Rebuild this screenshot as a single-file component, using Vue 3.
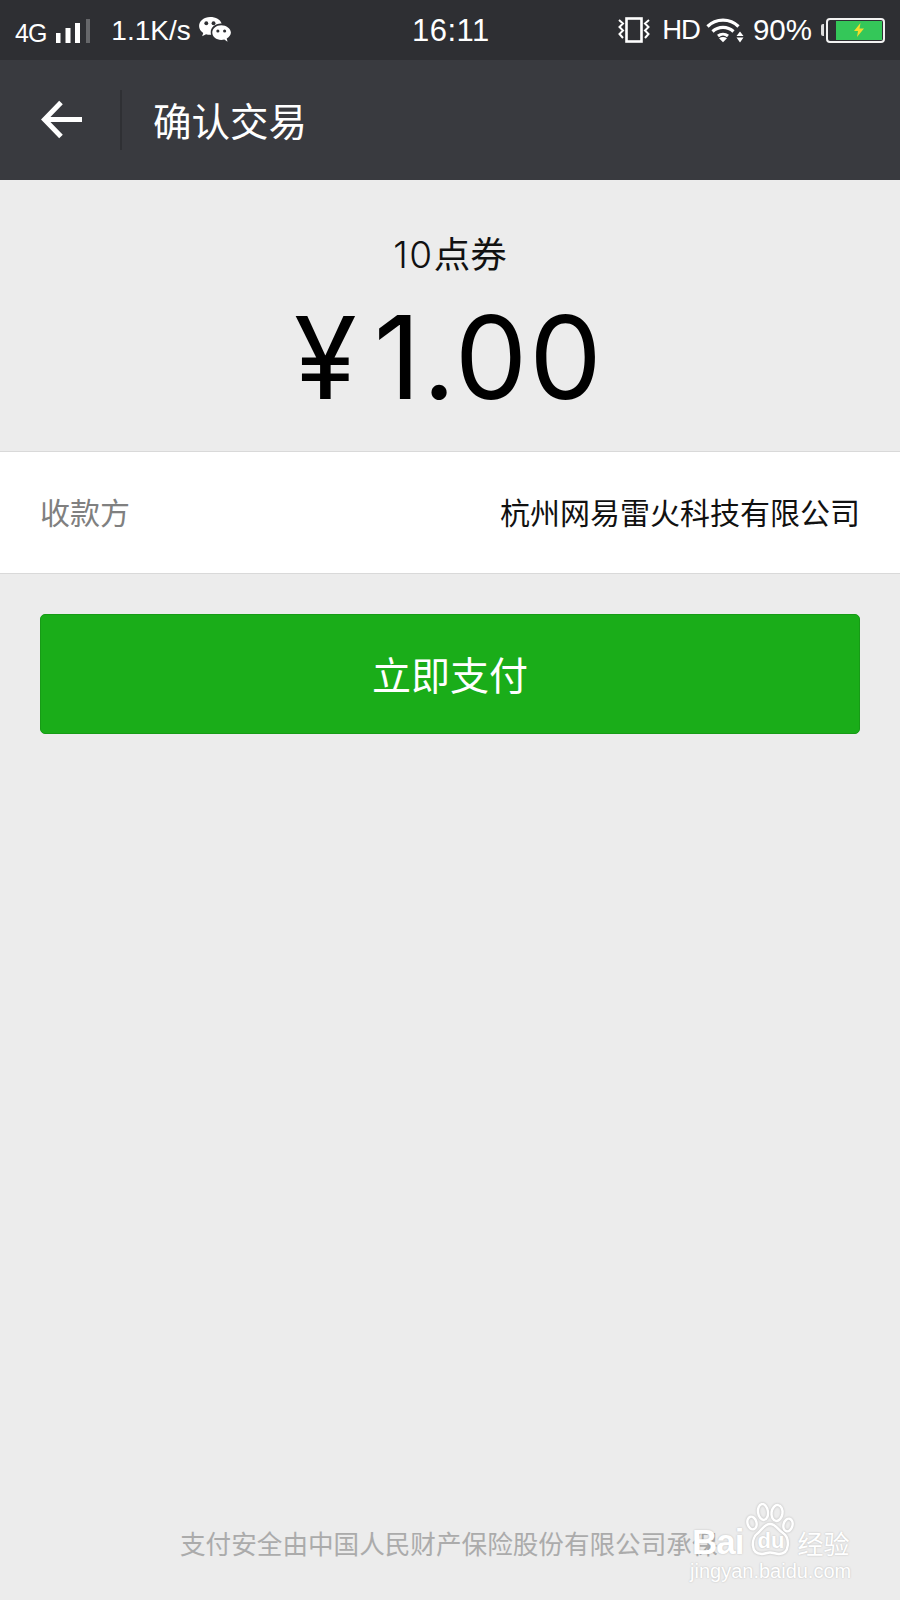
<script setup>
const payee = '杭州网易雷火科技有限公司'
</script>

<template>
  <div class="page">
    <div class="status">
      <div class="left">
        <span class="net">4G</span>
        <svg class="signal" width="34" height="25" viewBox="0 0 34 25">
          <rect x="0" y="14" width="4.500" height="10" fill="#fff" />
          <rect x="9.500" y="9" width="5" height="15" fill="#fff" />
          <rect x="19" y="4" width="5" height="20" fill="#fff" />
          <rect x="30" y="0" width="4" height="24" fill="#66676a" />
        </svg>
        <span class="speed">1.1K/s</span>
        <svg class="wechat" width="33" height="27" viewBox="0 0 34 28">
          <path d="M12.500 0C6 0 1 4.200 1 9.400c0 3 1.700 5.500 4.300 7.300L4.200 20l4-2.100c1.300.4 2.800.6 4.300.6l1-.1c-.3-.9-.4-1.800-.4-2.700 0-5 4.700-8.900 10.400-8.900h.9C23.200 2.700 18.300 0 12.500 0z" fill="#fff" />
          <circle cx="8.500" cy="6.500" r="2" fill="#2e2f33" />
          <circle cx="16" cy="6.500" r="2" fill="#2e2f33" />
          <path d="M24 8.500c-5.200 0-9.300 3.400-9.300 7.700s4.100 7.700 9.300 7.700c1.100 0 2.200-.2 3.200-.5l3.300 2.300-.8-3.400c2.600-1.400 4.300-3.500 4.300-6.100 0-4.300-4.800-7.700-10-7.700z" fill="#fff" />
          <circle cx="20.500" cy="14.500" r="1.600" fill="#2e2f33" />
          <circle cx="27.500" cy="14.500" r="1.600" fill="#2e2f33" />
        </svg>
      </div>
      <span class="clock">16:11</span>
      <div class="right">
        <svg class="vibrate" width="34" height="26" viewBox="0 0 34 26">
          <rect x="9.500" y="1.500" width="15" height="23" fill="none" stroke="#fff" stroke-width="2.600" />
          <path d="M2 3l4 3.500-3.500 3.500 3.500 3.500-3.500 3.500 3.500 4M32 3l-4 3.500 3.500 3.500-3.500 3.500 3.500 3.500-3.500 4" fill="none" stroke="#fff" stroke-width="2" />
        </svg>
        <span class="hd">HD</span>
        <svg class="wifi" width="38" height="26" viewBox="0 0 38 26">
          <path d="M1.500 9.500C10 1 24 1 32.500 9.500" fill="none" stroke="#fff" stroke-width="3.200" />
          <path d="M6.500 14.500c6-5.500 15-5.500 21 0" fill="none" stroke="#fff" stroke-width="3.200" />
          <path d="M12 19c3-2.500 7-2.500 10 0" fill="none" stroke="#fff" stroke-width="3" />
          <path d="M13 21.200c2.500-1.500 5.500-1.500 8 0l-4 4z" fill="#fff" />
          <path d="M34 14.500l3.500 4.500h-7zM34 25.500l3.500-5h-7z" fill="#fff" />
        </svg>
        <span class="pct">90%</span>
        <div class="battery-wrap">
          <span class="nub"></span>
          <div class="battery">
            <div class="charge">
              <svg width="14" height="16" viewBox="0 0 14 16"><path d="M8.500 1L2 9h4l-1 6 7-8.500H7.500z" fill="#f3dc2b" /></svg>
            </div>
          </div>
        </div>
      </div>
    </div>

    <div class="nav">
      <svg class="back" width="44" height="44" viewBox="0 0 44 44">
        <path d="M21 4.500L4.500 21.500 21 38.500M5 21.500H42" fill="none" stroke="#fff" stroke-width="5" />
      </svg>
      <span class="divider"></span>
      <span class="title">确认交易</span>
    </div>

    <div class="summary">
      <div class="item"><span class="latin">10</span>点券</div>
      <div class="amount"><span class="yen">¥</span><span class="num">1.00</span></div>
    </div>

    <div class="row">
      <span class="label">收款方</span>
      <span class="value">{{ payee }}</span>
    </div>

    <div class="action">
      <button class="pay">立即支付</button>
    </div>

    <div class="footer">支付安全由中国人民财产保险股份有限公司承保</div>

    <div class="watermark">
      <div class="mark-top">
        <span class="bai">Bai</span>
        <div class="paw-box">
          <svg width="48" height="53" viewBox="0 0 48 53">
            <g fill="none" stroke="#fff" stroke-width="2.400">
              <ellipse cx="6" cy="20" rx="4.500" ry="6.500" transform="rotate(-15 6 20)" />
              <ellipse cx="17" cy="9" rx="5" ry="8" transform="rotate(-8 17 9)" />
              <ellipse cx="31" cy="10" rx="5.500" ry="8" transform="rotate(8 31 10)" />
              <ellipse cx="42" cy="22" rx="4.500" ry="6.500" transform="rotate(15 42 22)" />
              <path d="M24 21c-6 0-8 6-12 9-7 5-8 21 4 21 3 0 5-1.500 8-1.500s6 1.500 9 1.500c11 0 11-16 4-21-5-3-7-9-13-9z" />
            </g>
          </svg>
          <span class="du">du</span>
        </div>
        <span class="jy">经验</span>
      </div>
      <div class="mark-url">jingyan.baidu.com</div>
    </div>
  </div>
</template>

<style>
html, body { margin: 0; padding: 0; }
</style>

<style scoped>
.page {
  position: relative;
  width: 900px;
  height: 1600px;
  overflow: hidden;
  background: #ececec;
  display: flex;
  flex-direction: column;
  font-family: "Noto Sans CJK SC", "Noto Sans", sans-serif;
}
.status {
  height: 60px;
  flex: none;
  background: #2e2f33;
  color: #fff;
  display: flex;
  align-items: center;
  justify-content: space-between;
  padding: 0 15px;
  box-sizing: border-box;
  font-family: "Liberation Sans", sans-serif;
  position: relative;
}
.left, .right { display: flex; align-items: center; }
.net { font-size: 25px; margin-top: 7px; letter-spacing: -1px; }
.signal { margin-left: 10px; margin-top: 2px; flex: none; }
.speed { font-size: 28px; margin-left: 21px; margin-top: 1px; }
.wechat { margin-left: 7px; flex: none; }
.clock {
  position: absolute;
  left: 412px;
  top: 9px;
  font-size: 31px;
  line-height: 44px;
  letter-spacing: .5px;
}
.right { margin-left: auto; }
.vibrate { margin-right: 11px; flex: none; }
.hd { font-size: 27.500px; margin-right: 6px; letter-spacing: -1px; }
.wifi { margin-right: 9px; flex: none; }
.pct { font-size: 29.500px; margin-right: 9px; }
.battery-wrap { display: flex; align-items: center; }
.nub { width: 3px; height: 12px; background: #ddd; border-radius: 2px 0 0 2px; margin-right: 2px; }
.battery {
  width: 59px;
  height: 25px;
  border: 2px solid #f2f2f2;
  border-radius: 4px;
  box-sizing: border-box;
  padding: 1px 1px 1px 8px;
  display: flex;
}
.charge {
  flex: 1;
  background: #34c759;
  display: flex;
  align-items: center;
  justify-content: center;
}
.nav {
  height: 120px;
  flex: none;
  background: #393a3f;
  display: flex;
  align-items: center;
  padding-left: 40px;
  box-sizing: border-box;
}
.back { flex: none; }
.divider {
  width: 2px;
  height: 60px;
  background: #2f3034;
  margin-left: 36px;
  margin-right: 31px;
}
.title { color: #fff; font-size: 38.500px; margin-top: -3px; }
.summary {
  height: 271px;
  flex: none;
  box-sizing: border-box;
  padding-top: 48px;
  text-align: center;
  color: #000;
}
.item { font-size: 36.500px; line-height: 50px; color: #111; }
.latin { font-family: Inter, "Liberation Sans", sans-serif; font-size: 37px; font-weight: 300; letter-spacing: 1.500px; }
.amount {
  font-family: Inter, "Liberation Sans", sans-serif;
  line-height: 130px;
  margin-top: 13px;
  padding-right: 2px;
  display: flex;
  justify-content: center;
  align-items: baseline;
}
.yen {
  font-size: 114px;
  margin-right: 17px;
}
.num { font-size: 115px; letter-spacing: 2px; }
.row {
  height: 123px;
  flex: none;
  box-sizing: border-box;
  background: #fff;
  border-top: 1px solid #d9d9d9;
  border-bottom: 1px solid #d9d9d9;
  display: flex;
  align-items: center;
  justify-content: space-between;
  padding: 0 40px 3px;
  font-size: 30px;
}
.label { color: #808080; }
.value { color: #111; }
.action { padding: 40px 40px 0; }
.pay {
  display: block;
  width: 100%;
  height: 120px;
  padding: 0 0 2px;
  background: #1aad19;
  border: 1px solid #179b16;
  border-radius: 5px;
  color: #fff;
  font: inherit;
  font-size: 39px;
}
.footer {
  position: absolute;
  left: 180px;
  top: 1524px;
  font-size: 25.600px;
  line-height: 38px;
  color: #ababab;
  white-space: nowrap;
}
.watermark {
  position: absolute;
  left: 690px;
  top: 1503px;
  width: 166px;
  color: #fff;
  font-family: "Liberation Sans", sans-serif;
  text-shadow: 0 0 2px rgba(0, 0, 0, .22);
}
.mark-top { display: flex; align-items: flex-end; height: 53px; white-space: nowrap; }
.bai { font-size: 35px; line-height: 40px; font-weight: 700; letter-spacing: -1px; margin-left: 2px; margin-bottom: -6px; }
.paw-box { position: relative; width: 48px; height: 53px; flex: none; margin-left: 3px; }
.paw-box svg { filter: drop-shadow(0 0 1px rgba(0, 0, 0, .22)); }
.du {
  position: absolute;
  left: 11px;
  top: 26px;
  font-size: 22px;
  line-height: 24px;
  font-weight: 700;
}
.jy { font-size: 26px; line-height: 30px; font-family: "Noto Sans CJK SC", sans-serif; margin-left: 3px; margin-bottom: -2px; }
.mark-url { font-size: 20px; line-height: 24px; white-space: nowrap; margin-top: 3px; }
</style>
